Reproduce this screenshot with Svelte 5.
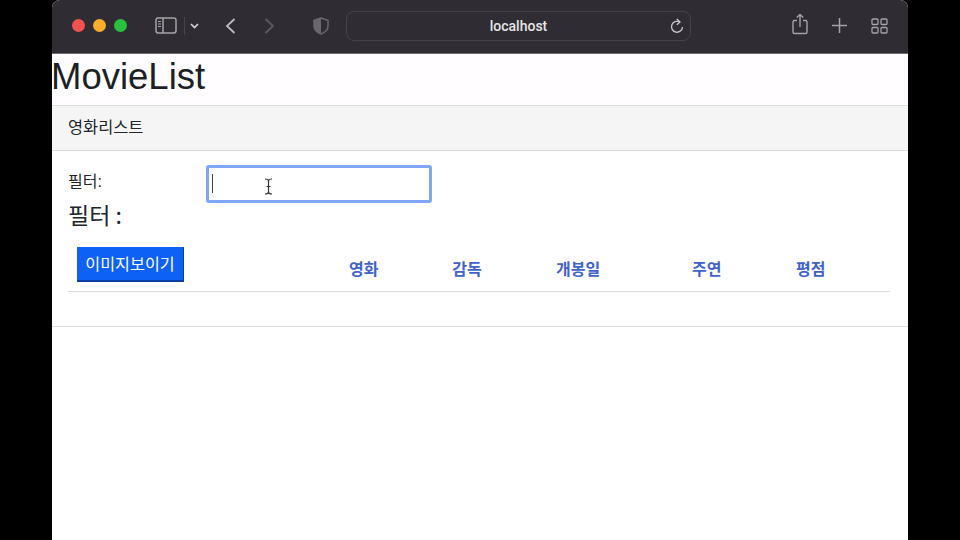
<script>
  const columns = ['영화', '감독', '개봉일', '주연', '평점'];
</script>

<div class="window">
  <header class="toolbar">
    <div class="lights">
      <span class="light red"></span>
      <span class="light yellow"></span>
      <span class="light green"></span>
    </div>
    <svg class="sidebar" width="22" height="17" viewBox="0 0 22 17" fill="none" stroke="#a5a3a6" stroke-width="1.5">
      <rect x="1" y="1" width="20" height="15" rx="2.2" />
      <path d="M8 1v15" />
      <path d="M3 4.5h3M3 7h3M3 9.500h3" stroke-width="1" />
    </svg>
    <span class="divider"></span>
    <svg class="chev" width="9" height="6" viewBox="0 0 9 6" fill="none" stroke="#d4d3d5" stroke-width="1.7">
      <path d="M1 1l3.500 3.500L8 1" />
    </svg>
    <svg class="back" width="11" height="16" viewBox="0 0 11 16" fill="none" stroke="#bdbbbe" stroke-width="1.800">
      <path d="M9.500 1L2 8l7.500 7" />
    </svg>
    <svg class="forward" width="11" height="16" viewBox="0 0 11 16" fill="none" stroke="#5c5a5f" stroke-width="1.800">
      <path d="M1.500 1L9 8l-7.500 7" />
    </svg>
    <svg class="shield" width="16" height="18" viewBox="0 0 16 18">
      <path d="M8 1L1 3.200V9c0 4 3 6.500 7 8 4-1.500 7-4 7-8V3.200z" fill="none" stroke="#69676c" stroke-width="1.500" />
      <path d="M8 1L1 3.200V9c0 4 3 6.500 7 8z" fill="#69676c" />
    </svg>
    <div class="address">
      <span class="host">localhost</span>
      <svg class="reload" width="14" height="16" viewBox="0 0 14 16" fill="none" stroke="#c9c8ca" stroke-width="1.300">
        <path d="M9.800 4A5.500 5.500 0 1 0 12.500 9" />
        <path d="M6.800 1l3.200 3-3.200 2.800" />
      </svg>
    </div>
    <svg class="share" width="16" height="22" viewBox="0 0 16 22" fill="none" stroke="#a5a3a6" stroke-width="1.400">
      <path d="M5 7.500H2.500A1.500 1.500 0 0 0 1 9v10a1.500 1.500 0 0 0 1.500 1.500h11A1.500 1.500 0 0 0 15 19V9a1.500 1.500 0 0 0-1.500-1.500H11" />
      <path d="M8 14V1.500M4.800 4.500L8 1.500l3.200 3" />
    </svg>
    <svg class="plus" width="15" height="15" viewBox="0 0 15 15" fill="none" stroke="#a5a3a6" stroke-width="1.500">
      <path d="M7.500 0v15M0 7.500h15" />
    </svg>
    <svg class="tabs" width="17" height="16" viewBox="0 0 17 16" fill="none" stroke="#a5a3a6" stroke-width="1.300">
      <rect x="1" y="1" width="6" height="5.500" rx="1" />
      <rect x="10" y="1" width="6" height="5.500" rx="1" />
      <rect x="1" y="9.500" width="6" height="5.500" rx="1" />
      <rect x="10" y="9.500" width="6" height="5.500" rx="1" />
    </svg>
  </header>

  <main class="page">
    <h1>MovieList</h1>
    <section class="card">
      <div class="card-header">영화리스트</div>
      <div class="card-body">
        <div class="filter-row">
          <label for="filter">필터:</label>
          <div class="input-wrap">
            <input id="filter" type="text" />
            <span class="caret"></span>
            <svg class="ibeam" width="9" height="17" viewBox="0 0 9 17" fill="none" stroke="#333" stroke-width="1.200">
              <path d="M1 1c2 0 3.500.5 3.500 2v11c0 1.500-1.500 2-3.500 2M8 1c-2 0-3.500.5-3.500 2v11c0 1.500 1.500 2 3.500 2M2.500 8.500h4" />
            </svg>
          </div>
        </div>
        <h4>필터 :</h4>
        <div class="table-head">
          <div class="cell-first"><button type="button">이미지보이기</button></div>
          {#each columns as column}
            <div class="th">{column}</div>
          {/each}
        </div>
      </div>
    </section>
  </main>
</div>

<style>
  :global(body) {
    margin: 0;
    background: #000;
  }

  .window {
    width: 856px;
    height: 540px;
    margin-left: 52px;
    background: #fff;
    font-family: "Liberation Sans", "Noto Sans CJK KR", sans-serif;
    color: #212529;
    display: flex;
    flex-direction: column;
    overflow: hidden;
    border-radius: 8px 8px 0 0;
  }

  .toolbar {
    height: 51px;
    padding-bottom: 2px;
    flex: none;
    background: #2f2c33;
    border-bottom: 1px solid #6c6a6e;
    box-sizing: content-box;
    display: flex;
    align-items: center;
  }

  .lights {
    display: flex;
    gap: 8px;
    margin-left: 20px;
  }

  .light {
    width: 13px;
    height: 13px;
    border-radius: 50%;
  }

  .red { background: #f1524d; }
  .yellow { background: #f6ae2c; }
  .green { background: #28c13e; }

  .sidebar { margin-left: 28px; }

  .divider {
    width: 1px;
    height: 18px;
    background: #47454a;
    margin-left: 7px;
  }

  .chev { margin-left: 5px; }
  .back { margin-left: 26px; }
  .forward { margin-left: 28px; }
  .shield { margin-left: 38px; }

  .address {
    width: 343px;
    height: 28px;
    margin-left: 17px;
    border: 1px solid #45434a;
    border-radius: 8px;
    position: relative;
    display: flex;
    align-items: center;
    justify-content: center;
  }

  .host {
    color: #e6e5e7;
    font-family: Roboto, sans-serif;
    font-size: 14px;
    font-weight: 500;
  }

  .reload {
    position: absolute;
    right: 6px;
    top: 6px;
  }

  .share { margin-left: 101px; margin-bottom: 4px; }
  .plus { margin-left: 24px; }
  .tabs { margin-left: 24px; }

  .page {
    flex: 1;
    display: flex;
    flex-direction: column;
  }

  h1 {
    margin: 0;
    height: 51px;
    font-size: 36.500px;
    line-height: 46px;
    font-weight: 400;
    flex: none;
    background: #fffdff;
    color: #1c1f23;
    text-indent: -1px;
  }

  .card {
    border-top: 1px solid #dcdcdc;
    border-bottom: 1px solid #dfdfdf;
    height: 222px;
    box-sizing: border-box;
  }

  .card-header {
    height: 45px;
    background: #f5f5f5;
    border-bottom: 1px solid #dcdcdc;
    box-sizing: border-box;
    padding-left: 16px;
    font-size: 16.400px;
    line-height: 43px;
  }

  .card-body {
    padding: 14px 18px 0 16px;
  }

  .filter-row {
    display: grid;
    grid-template-columns: 138px 226px;
    height: 38px;
  }

  label {
    font-size: 16px;
    line-height: 33px;
  }

  .input-wrap {
    position: relative;
    height: 38px;
    width: 226px;
  }

  input {
    width: 100%;
    height: 100%;
    box-sizing: border-box;
    border: 3px solid #7ea6f2;
    border-radius: 3px;
    background: #fff;
    outline: none;
    padding: 0;
    display: block;
  }

  .caret {
    position: absolute;
    left: 6px;
    top: 9px;
    width: 1px;
    height: 19px;
    background: #444;
  }

  .ibeam {
    position: absolute;
    left: 58px;
    top: 13px;
  }

  h4 {
    margin: 0;
    font-family: "Noto Sans CJK KR", sans-serif;
    font-size: 23px;
    font-weight: 400;
    line-height: 22px;
    height: 29px;
  }

  .table-head {
    display: grid;
    grid-template-columns: 281px 103.300px 103.700px 136px 104px 1fr;
    height: 60px;
    border-bottom: 1px solid #dadde0;
    box-sizing: border-box;
    padding-top: 15px;
  }

  .cell-first {
    padding-left: 9px;
  }

  button {
    height: 35px;
    width: 107px;
    background: #0d62f5;
    color: #fff;
    font: inherit;
    font-size: 16.200px;
    font-weight: 400;
    border: none;
    border-right: 1px solid #0a3fa6;
    border-bottom: 2px solid #0a3fa6;
    padding: 0 0 2px;
    border-radius: 0;
  }

  .th {
    color: #3f62cc;
    font-size: 16px;
    font-weight: 700;
    line-height: 46px;
  }
</style>
